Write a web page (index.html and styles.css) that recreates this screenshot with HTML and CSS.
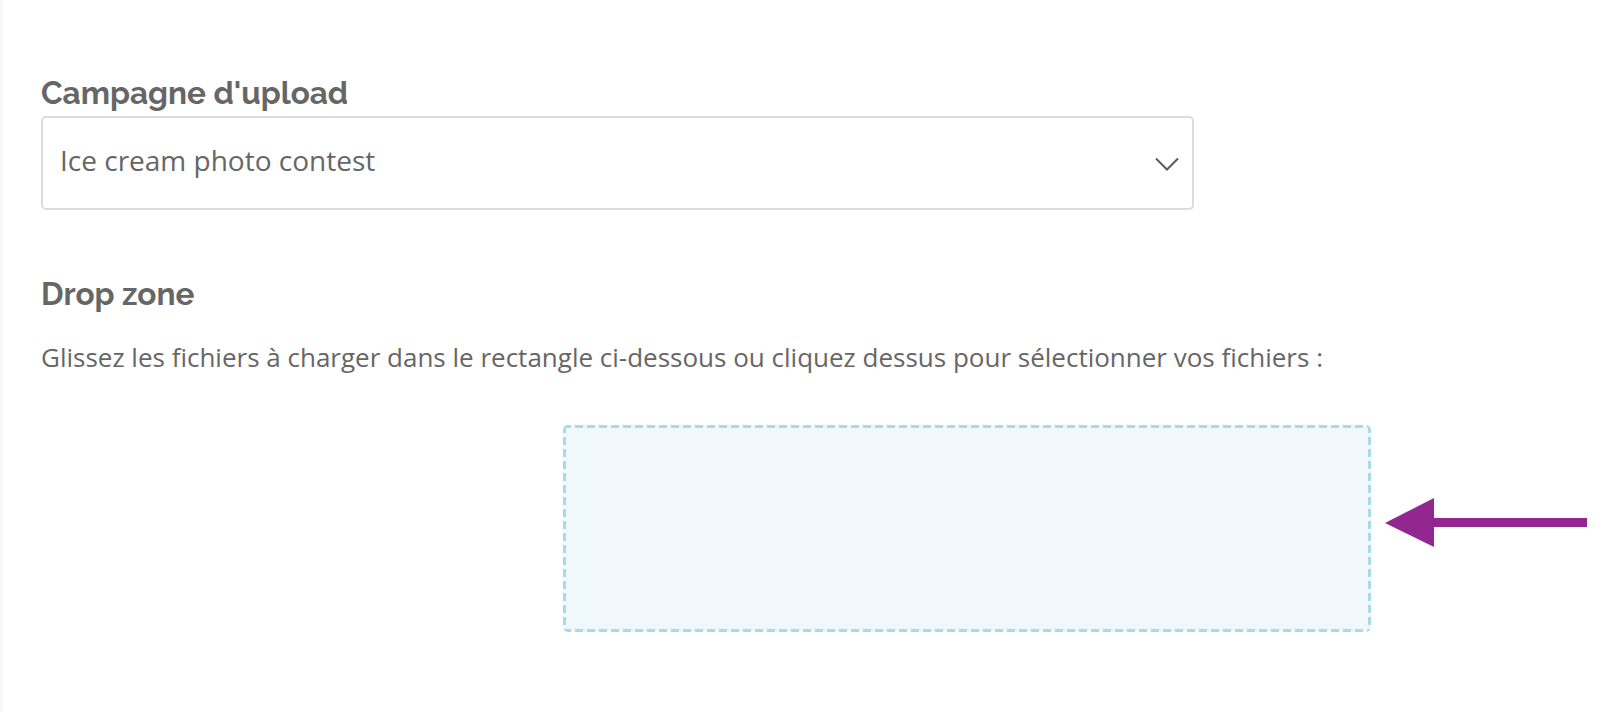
FILE: index.html
```html
<!DOCTYPE html>
<html lang="fr">
<head>
  <meta charset="UTF-8" />
  <meta name="viewport" content="width=device-width, initial-scale=1.0" />
  <title>Upload</title>
  <link rel="stylesheet" href="styles.css">
</head>
<body>
  <main class="page">
    <section class="field">
      <h2 class="field-label">Campagne d'upload</h2>
      <div class="select">
        <span class="select-value">Ice cream photo contest</span>
        <svg class="chevron" width="24" height="14" viewBox="0 0 24 14">
          <path d="M1 1.5 L12 12.5 L23 1.5" fill="none" stroke="#5a5a5a" stroke-width="2" />
        </svg>
      </div>
    </section>

    <section class="field drop-field">
      <h2 class="field-label">Drop zone</h2>
      <p class="hint">Glissez les fichiers à charger dans le rectangle ci-dessous ou cliquez dessus pour sélectionner vos fichiers :</p>
      <div class="drop-row">
        <div class="dropzone"></div>
        <svg class="pointer" width="202" height="49" viewBox="0 0 202 49">
          <polygon points="0,25 49,0 49,49" fill="#92278f" />
          <rect x="48" y="20" width="154" height="9" fill="#92278f" />
        </svg>
      </div>
    </section>
  </main>
</body>
</html>
```

FILE: styles.css
```css
* {
  margin: 0;
  padding: 0;
  box-sizing: border-box;
}

html, body {
  height: 100%;
}

body {
  font-family: 'Open Sans', 'Liberation Sans', sans-serif;
  background-color: #fff;
  color: #666;
  border-left: 3px solid #f8f8f8;
}

.page {
  padding: 74px 0 0 38px;
}

.field-label {
  font-family: 'Raleway', 'Lato', 'Open Sans', sans-serif;
  font-weight: 700;
  font-size: 31.5px;
  line-height: 38px;
  color: #666;
}

.select {
  display: flex;
  align-items: center;
  justify-content: space-between;
  width: 1153px;
  height: 94px;
  margin-top: 4px;
  padding: 0 13px 0 17px;
  border: 2px solid #dcdcdc;
  border-radius: 5px;
  background: #fff;
}

.select-value {
  font-size: 28px;
  line-height: 38px;
  color: #666;
  margin-top: -6px;
}

.chevron {
  margin-top: 1px;
}

.drop-field {
  margin-top: 65px;
}

.hint {
  font-size: 26px;
  line-height: 36px;
  margin-top: 26px;
  color: #666;
}

.drop-row {
  position: relative;
  margin-top: 50px;
  padding-left: 522px;
}

/* dashed edge drawn by hand: 8px dash, 4px gap */
.dropzone {
  width: 808px;
  height: 207px;
  border-radius: 5px;
  background:
    repeating-linear-gradient(90deg, #a8dbe8 0 8px, transparent 8px 12px) left top / 100% 3px no-repeat,
    repeating-linear-gradient(90deg, #a8dbe8 0 8px, transparent 8px 12px) left bottom / 100% 3px no-repeat,
    repeating-linear-gradient(180deg, #a8dbe8 0 8px, transparent 8px 12px) left top / 3px 100% no-repeat,
    repeating-linear-gradient(180deg, #a8dbe8 0 8px, transparent 8px 12px) right top / 3px 100% no-repeat,
    #f0f8fb;
}

.pointer {
  position: absolute;
  left: 1344px;
  top: 73px;
}
```
